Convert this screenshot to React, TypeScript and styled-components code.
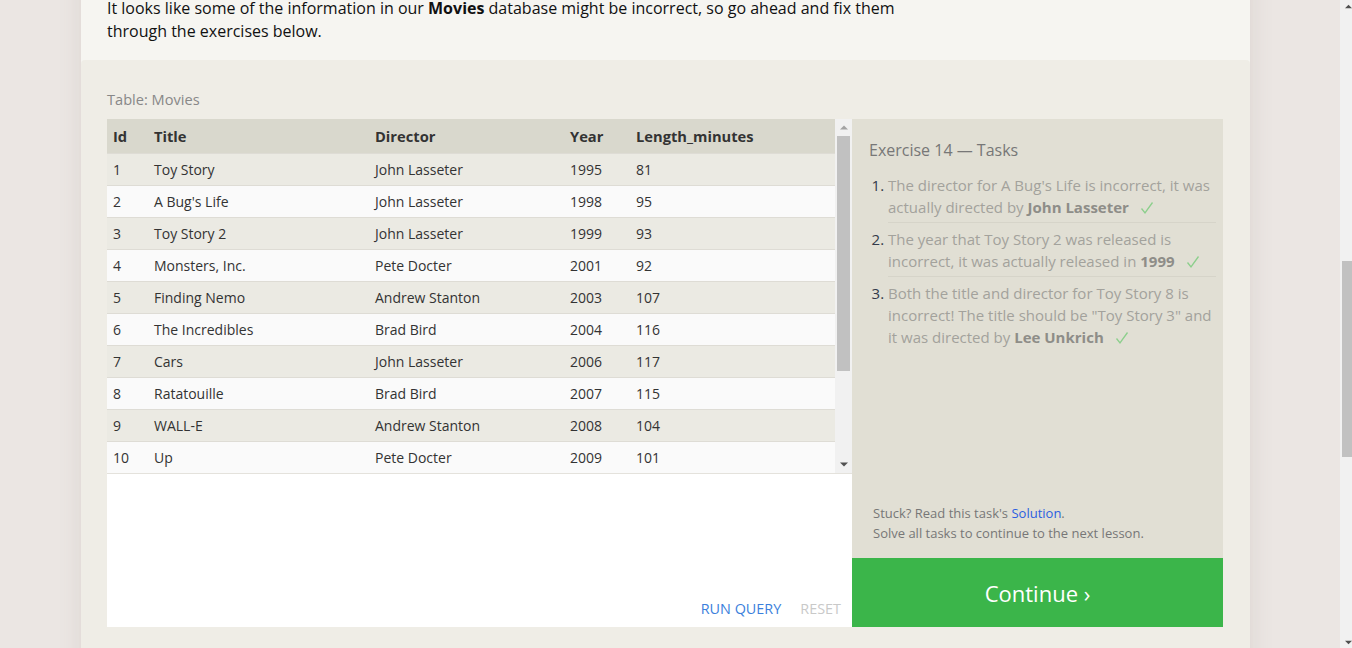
import React, { useLayoutEffect, useRef } from "react";
import styled, { createGlobalStyle } from "styled-components";

const FONT = `"Open Sans", "Noto Sans", "DejaVu Sans", sans-serif`;

const GlobalStyle = createGlobalStyle`
  html, body { margin: 0; padding: 0; height: 100%; overflow: hidden; }
  body { font-family: ${FONT}; background: #ebe6e3; color: #111; }
  #root { height: 100%; }
  * { box-sizing: border-box; }
`;

/* ---------- fake scrollbars (the headless browser hides real ones) ---------- */

const Track = styled.div<{ $w: number }>`
  flex: 0 0 ${(p) => p.$w}px;
  width: ${(p) => p.$w}px;
  display: flex;
  flex-direction: column;
  background: #f1f1f1;
  overflow: hidden;
`;

const ArrowBox = styled.div<{ $h: number; $pl: number }>`
  flex: 0 0 ${(p) => p.$h}px;
  display: flex;
  align-items: center;
  padding-left: ${(p) => p.$pl}px;
`;

const ThumbZone = styled.div<{ $pl: number }>`
  flex: 1;
  padding-left: ${(p) => p.$pl}px;
`;

const Thumb = styled.div<{ $w: number }>`
  width: ${(p) => p.$w}px;
  background: #c1c1c1;
`;

function Arrow({ dir, color }: { dir: "up" | "down"; color: string }) {
  return (
    <svg width="8" height="5" viewBox="0 0 8 5" aria-hidden="true">
      <polygon points={dir === "up" ? "0,4.5 4,0.5 8,4.5" : "0,0.5 8,0.5 4,4.5"} fill={color} />
    </svg>
  );
}

function ScrollBar(props: {
  width: number;
  arrowH: number;
  arrowLeft: number;
  thumbLeft: number;
  thumbW: number;
  thumbTop: number;
  thumbH: number;
  upColor: string;
  downColor: string;
}) {
  return (
    <Track $w={props.width}>
      <ArrowBox $h={props.arrowH} $pl={props.arrowLeft}>
        <Arrow dir="up" color={props.upColor} />
      </ArrowBox>
      <ThumbZone $pl={props.thumbLeft}>
        <Thumb $w={props.thumbW} style={{ marginTop: props.thumbTop, height: props.thumbH }} />
      </ThumbZone>
      <ArrowBox $h={props.arrowH} $pl={props.arrowLeft}>
        <Arrow dir="down" color={props.downColor} />
      </ArrowBox>
    </Track>
  );
}

/* ---------- page ---------- */

const Frame = styled.div`
  display: flex;
  height: 100vh;
`;

const Viewport = styled.div`
  flex: 1;
  height: 100vh;
  overflow: hidden;
  background: #ebe6e3;
`;

const PageWrap = styled.div`
  display: flex;
  justify-content: center;
  padding-right: 8px;
`;

const Card = styled.main`
  width: 1170px;
  background: #f6f5f1;
  box-shadow: 0 0 22px rgba(120, 100, 90, 0.12);
  border-right: 1px solid #e2dcd9;
`;

const SiteHeader = styled.header`
  padding: 40px 26px 30px;
  display: flex;
  align-items: baseline;
  gap: 16px;
`;

const Logo = styled.div`
  font-size: 30px;
  font-weight: 700;
  color: #2e2e2e;
`;

const Tagline = styled.div`
  font-size: 15px;
  color: #888;
`;

const LessonBody = styled.section`
  padding: 0 26px;
`;

const LessonTitle = styled.h1`
  margin: 0 0 18px;
  font-size: 26px;
  font-weight: 400;
  color: #222;
`;

const Para = styled.p`
  margin: 0 0 18px;
  font-size: 16px;
  line-height: 23px;
  color: #111;
  width: 820px;
`;

const CodeBlock = styled.pre`
  margin: 0 0 18px;
  padding: 12px 16px;
  background: #efede6;
  font-family: "Liberation Mono", monospace;
  font-size: 14px;
  line-height: 20px;
  width: 820px;
  color: #333;
`;

const SubTitle = styled.h2`
  margin: 24px 0 12px;
  font-size: 20px;
  font-weight: 400;
  color: #222;
`;

const Intro = styled.p`
  margin: 0;
  padding: 0 26px 17px;
  font-size: 16px;
  line-height: 23px;
  color: #111;
  width: 820px;
  box-sizing: content-box;
`;

const Exercise = styled.section`
  background: #efede6;
  border-radius: 4px 4px 0 0;
  padding: 29px 27px 26px 26px;
`;

const TableLabel = styled.div`
  font-size: 14.6px;
  line-height: 20px;
  color: #888;
  margin-bottom: 10px;
`;

const Widget = styled.div`
  display: flex;
  height: 508px;
`;

const QueryPane = styled.div`
  flex: 0 0 745px;
  display: flex;
  flex-direction: column;
  background: #fff;
`;

const TableArea = styled.div`
  display: flex;
  height: 355px;
  border-bottom: 1px solid #e4e2dc;
`;

const TableViewport = styled.div`
  flex: 1;
  overflow: hidden;
`;

const Table = styled.table`
  width: 100%;
  border-collapse: collapse;
  font-size: 14px;
  color: #333;
  table-layout: fixed;
`;

const HeadCell = styled.th<{ $w?: number }>`
  height: 34px;
  padding: 0 6px;
  text-align: left;
  font-size: 14.7px;
  font-weight: 700;
  background: #d9d8cd;
  width: ${(p) => (p.$w ? `${p.$w}px` : "auto")};
`;

const Row = styled.tr<{ $odd: boolean }>`
  background: ${(p) => (p.$odd ? "#ebeae3" : "#fafafa")};
`;

const Cell = styled.td`
  height: 32px;
  padding: 0 6px;
  border-top: 1px solid #dedcd5;
  white-space: nowrap;
`;

const Editor = styled.div`
  flex: 1;
  display: flex;
  flex-direction: column;
  justify-content: flex-end;
`;

const Actions = styled.div`
  display: flex;
  justify-content: flex-end;
  gap: 19px;
  padding: 0 11px 8px 0;
`;

const ActionBtn = styled.button<{ $disabled?: boolean }>`
  border: 0;
  background: none;
  padding: 0;
  font-family: ${FONT};
  font-size: 14.4px;
  line-height: 20px;
  color: ${(p) => (p.$disabled ? "#c9c9c9" : "#3b7fdc")};
  cursor: pointer;
`;

const TaskPane = styled.div`
  flex: 0 0 371px;
  display: flex;
  flex-direction: column;
  background: #e1dfd4;
`;

const TaskBody = styled.div`
  flex: 1;
  display: flex;
  flex-direction: column;
  padding: 20px 7px 0 17px;
`;

const TaskTitle = styled.div`
  font-size: 16px;
  line-height: 22px;
  color: #777;
  margin-bottom: 13px;
`;

const TaskList = styled.ol`
  margin: 0;
  padding: 0 0 0 19px;
  font-size: 15px;
  line-height: 22px;
  color: #a3a29c;
`;

const TaskItem = styled.li<{ $last?: boolean }>`
  padding: 5px 0 4px;
  border-bottom: ${(p) => (p.$last ? "none" : "1px solid #d6d4c9")};
  &::marker { color: #333a4a; }
  &:first-child { padding-top: 0; }
`;

const Strong = styled.b`
  color: #8e8d88;
`;

const CheckMark = styled.svg`
  margin-left: 11px;
  vertical-align: -2px;
`;

function Check() {
  return (
    <CheckMark width="14" height="14" viewBox="0 0 14 14" aria-hidden="true">
      <polyline points="1.5,7.5 5,12 12.5,1.5" fill="none" stroke="#8ccf8c" strokeWidth="1.3" />
    </CheckMark>
  );
}

const Help = styled.div`
  margin-top: auto;
  padding: 0 0 15px 4px;
  font-size: 13px;
  line-height: 20px;
  color: #777;
`;

const HelpLink = styled.a`
  color: #2b5ee0;
  text-decoration: none;
`;

const ContinueBtn = styled.button`
  height: 69px;
  border: 0;
  background: #3bb54a;
  color: #fff;
  font-family: ${FONT};
  font-size: 22px;
  cursor: pointer;
`;

const Footer = styled.footer`
  padding: 30px 26px;
  min-height: 340px;
  font-size: 15px;
  line-height: 24px;
  color: #777;
`;

const movies: [number, string, string, number, number][] = [
  [1, "Toy Story", "John Lasseter", 1995, 81],
  [2, "A Bug's Life", "John Lasseter", 1998, 95],
  [3, "Toy Story 2", "John Lasseter", 1999, 93],
  [4, "Monsters, Inc.", "Pete Docter", 2001, 92],
  [5, "Finding Nemo", "Andrew Stanton", 2003, 107],
  [6, "The Incredibles", "Brad Bird", 2004, 116],
  [7, "Cars", "John Lasseter", 2006, 117],
  [8, "Ratatouille", "Brad Bird", 2007, 115],
  [9, "WALL-E", "Andrew Stanton", 2008, 104],
  [10, "Up", "Pete Docter", 2009, 101],
  [11, "Toy Story 3", "Lee Unkrich", 2010, 103],
  [12, "Cars 2", "John Lasseter", 2011, 120],
  [13, "Brave", "Brenda Chapman", 2012, 102],
  [14, "Monsters University", "Dan Scanlon", 2013, 110],
];

export default function App() {
  const scrollRef = useRef<HTMLDivElement>(null);
  const introRef = useRef<HTMLParagraphElement>(null);

  useLayoutEffect(() => {
    const s = scrollRef.current;
    const i = introRef.current;
    if (!s || !i) return;
    const offset = i.getBoundingClientRect().top - s.getBoundingClientRect().top + s.scrollTop;
    s.scrollTop = offset + 3;
  }, []);

  return (
    <>
      <GlobalStyle />
      <Frame>
        <Viewport ref={scrollRef}>
          <PageWrap>
            <Card>
              <SiteHeader>
                <Logo>SQLBolt</Logo>
                <Tagline>Learn SQL with simple, interactive exercises.</Tagline>
              </SiteHeader>
              <LessonBody>
                <LessonTitle>SQL Lesson 14: Updating rows</LessonTitle>
                <Para>
                  In addition to adding new data, a common task is to update existing data, which
                  can be done using an UPDATE statement. Similar to the INSERT statement, you have
                  to specify exactly which table, columns, and rows to update. In addition, the
                  data you are updating has to match the data type of the columns in the table
                  schema.
                </Para>
                <CodeBlock>
                  {"Update statement with values\nUPDATE mytable\nSET column = value_or_expr, \n    other_column = another_value_or_expr, \n    …\nWHERE condition;"}
                </CodeBlock>
                <Para>
                  The statement works by taking multiple column/value pairs, and applying those
                  changes to each and every row that satisfies the constraint in the WHERE clause.
                </Para>
                <SubTitle>Taking care</SubTitle>
                <Para>
                  Most people working with SQL will make mistakes updating data at one point or
                  another. Whether it's updating the wrong set of rows in a production database, or
                  accidentally leaving out the WHERE clause (which causes the update to apply to
                  all rows), you need to be extra careful when constructing UPDATE statements.
                </Para>
                <SubTitle>Exercise</SubTitle>
              </LessonBody>
              <Intro ref={introRef}>
                It looks like some of the information in our <b>Movies</b> database might be
                incorrect, so go ahead and fix them through the exercises below.
              </Intro>
              <Exercise>
                <TableLabel>Table: Movies</TableLabel>
                <Widget>
                  <QueryPane>
                    <TableArea>
                      <TableViewport>
                        <Table>
                          <thead>
                            <tr>
                              <HeadCell $w={41}>Id</HeadCell>
                              <HeadCell $w={221}>Title</HeadCell>
                              <HeadCell $w={195}>Director</HeadCell>
                              <HeadCell $w={66}>Year</HeadCell>
                              <HeadCell>Length_minutes</HeadCell>
                            </tr>
                          </thead>
                          <tbody>
                            {movies.map((m, idx) => (
                              <Row key={m[0]} $odd={idx % 2 === 0}>
                                {m.map((v, j) => (
                                  <Cell key={j}>{v}</Cell>
                                ))}
                              </Row>
                            ))}
                          </tbody>
                        </Table>
                      </TableViewport>
                      <ScrollBar
                        width={17}
                        arrowH={17}
                        arrowLeft={5}
                        thumbLeft={2}
                        thumbW={13}
                        thumbTop={0}
                        thumbH={235}
                        upColor="#a3a3a3"
                        downColor="#505050"
                      />
                    </TableArea>
                    <Editor>
                      <Actions>
                        <ActionBtn>RUN QUERY</ActionBtn>
                        <ActionBtn $disabled>RESET</ActionBtn>
                      </Actions>
                    </Editor>
                  </QueryPane>
                  <TaskPane>
                    <TaskBody>
                      <TaskTitle>Exercise 14 — Tasks</TaskTitle>
                      <TaskList>
                        <TaskItem>
                          The director for A Bug's Life is incorrect, it was actually directed by{" "}
                          <Strong>John Lasseter</Strong>
                          <Check />
                        </TaskItem>
                        <TaskItem>
                          The year that Toy Story 2 was released is incorrect, it was actually
                          released in <Strong>1999</Strong>
                          <Check />
                        </TaskItem>
                        <TaskItem $last>
                          Both the title and director for Toy Story 8 is incorrect! The title
                          should be "Toy Story 3" and it was directed by{" "}
                          <Strong>Lee Unkrich</Strong>
                          <Check />
                        </TaskItem>
                      </TaskList>
                      <Help>
                        Stuck? Read this task's <HelpLink href="#">Solution</HelpLink>.
                        <br />
                        Solve all tasks to continue to the next lesson.
                      </Help>
                    </TaskBody>
                    <ContinueBtn>Continue ›</ContinueBtn>
                  </TaskPane>
                </Widget>
              </Exercise>
              <Footer>
                Next – SQL Lesson 15: Deleting rows
                <br />
                Previous – SQL Lesson 13: Inserting rows
              </Footer>
            </Card>
          </PageWrap>
        </Viewport>
        <ScrollBar
          width={12}
          arrowH={12}
          arrowLeft={5}
          thumbLeft={2}
          thumbW={10}
          thumbTop={249}
          thumbH={196}
          upColor="#505050"
          downColor="#505050"
        />
      </Frame>
    </>
  );
}
